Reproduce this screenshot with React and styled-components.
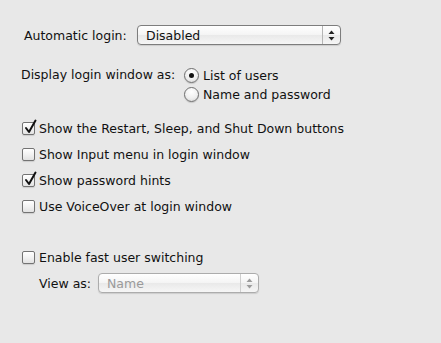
import React from 'react';
import styled, {createGlobalStyle} from 'styled-components';

const GlobalStyle = createGlobalStyle`
  html, body {
    margin: 0;
    padding: 0;
    background: #e8e8e8;
  }
  body {
    font-family: "DejaVu Sans", "Liberation Sans", sans-serif;
    font-size: 12.5px;
    color: #111;
  }
`;

const Pane = styled.div`
  width: 441px;
  height: 343px;
  box-sizing: border-box;
  padding: 25px 0 0 21px;
  display: flex;
  flex-direction: column;
  background: #e8e8e8;
`;

const LoginRow = styled.div`
  display: flex;
  align-items: center;
  height: 20px;
  padding-left: 3px;
`;

const Label = styled.span`
  white-space: nowrap;
  color: ${p => (p.disabled ? '#9a9a9a' : '#111')};
`;

const FieldLabel = styled(Label)`
  width: ${p => p.width}px;
  flex-shrink: 0;
`;

const Popup = styled.div`
  position: relative;
  width: ${p => p.width}px;
  height: 20px;
  box-sizing: border-box;
  border: 1px solid ${p => (p.disabled ? '#acacac' : '#7d7d7d')};
  border-radius: 4px;
  background: linear-gradient(#ffffff, #f4f4f4 50%, #e9e9e9 51%, #f6f6f6);
  box-shadow: 0 1px 1px rgba(0, 0, 0, 0.12);
  display: flex;
  align-items: center;
  padding-left: 8px;
  color: ${p => (p.disabled ? '#9a9a9a' : '#111')};
`;

const PopupArrows = styled.div`
  position: absolute;
  right: 0;
  top: 0;
  bottom: 0;
  width: 17px;
  border-left: 1px solid ${p => (p.disabled ? '#cfcfcf' : '#b5b5b5')};
  display: flex;
  align-items: center;
  justify-content: center;
`;

const DisplayRow = styled.div`
  display: flex;
  margin-top: 22px;
`;

const RadioGroup = styled.div`
  display: flex;
  flex-direction: column;
  gap: 4px;
  margin-left: 7px;
  padding-top: 1px;
`;

const RadioRow = styled.label`
  display: flex;
  align-items: center;
  gap: 4px;
  height: 15px;
`;

const RadioCircle = styled.span`
  width: 15px;
  height: 15px;
  box-sizing: border-box;
  border-radius: 50%;
  border: 1px solid #6e6e6e;
  background: radial-gradient(circle at 50% 30%, #ffffff, #f0f0f0 55%, #d4d4d4);
  box-shadow: 0 1px 1px rgba(0, 0, 0, 0.15);
  display: flex;
  align-items: center;
  justify-content: center;
  &::after {
    content: '';
    width: 5px;
    height: 5px;
    border-radius: 50%;
    background: ${p => (p.checked ? '#111' : 'transparent')};
  }
`;

const CheckList = styled.div`
  display: flex;
  flex-direction: column;
  gap: 13px;
  margin-top: 20px;
  padding-left: 1px;
`;

const CheckRow = styled.label`
  display: flex;
  align-items: center;
  gap: 4px;
  height: 13px;
`;

const Box = styled.span`
  position: relative;
  width: 13px;
  height: 13px;
  box-sizing: border-box;
  border: 1px solid #737373;
  border-radius: 2px;
  background: linear-gradient(#ffffff, #f2f2f2 50%, #e2e2e2);
  box-shadow: 0 1px 1px rgba(0, 0, 0, 0.12);
  flex-shrink: 0;
`;

const Tick = styled.svg`
  position: absolute;
  left: 1px;
  top: -4px;
`;

const FastSwitch = styled.div`
  margin-top: 38px;
  padding-left: 1px;
  display: flex;
  flex-direction: column;
`;

const ViewRow = styled.div`
  display: flex;
  align-items: center;
  margin-top: 9px;
  padding-left: 17px;
`;

const Arrows = ({disabled}) => (
    <svg width="7" height="11" viewBox="0 0 7 11">
        <polygon points="3.5,0.5 6.5,4 0.5,4" fill={disabled ? '#9c9c9c' : '#222'}/>
        <polygon points="0.5,7 6.5,7 3.5,10.5" fill={disabled ? '#9c9c9c' : '#222'}/>
    </svg>
);

const Checkbox = ({checked, children}) => (
    <CheckRow>
        <Box>
            {checked && (
                <Tick width="14" height="16" viewBox="0 0 14 16">
                    <path d="M2 9 L5 13 L11.5 1.5" fill="none" stroke="#111" strokeWidth="2"
                          strokeLinecap="round" strokeLinejoin="round"/>
                </Tick>
            )}
        </Box>
        <Label>{children}</Label>
    </CheckRow>
);

const Radio = ({checked, children}) => (
    <RadioRow>
        <RadioCircle checked={checked}/>
        <Label>{children}</Label>
    </RadioRow>
);

const options = [
    {text: 'Show the Restart, Sleep, and Shut Down buttons', checked: true},
    {text: 'Show Input menu in login window', checked: false},
    {text: 'Show password hints', checked: true},
    {text: 'Use VoiceOver at login window', checked: false},
];

export default function App() {
    return (
        <>
            <GlobalStyle/>
            <Pane>
                <LoginRow>
                    <FieldLabel width={113}>Automatic login:</FieldLabel>
                    <Popup width={204}>
                        Disabled
                        <PopupArrows><Arrows/></PopupArrows>
                    </Popup>
                </LoginRow>

                <DisplayRow>
                    <FieldLabel width={156}>Display login window as:</FieldLabel>
                    <RadioGroup>
                        <Radio checked>List of users</Radio>
                        <Radio>Name and password</Radio>
                    </RadioGroup>
                </DisplayRow>

                <CheckList>
                    {options.map((o, i) => (
                        <Checkbox key={`opt-${i}`} checked={o.checked}>{o.text}</Checkbox>
                    ))}
                </CheckList>

                <FastSwitch>
                    <Checkbox>Enable fast user switching</Checkbox>
                    <ViewRow>
                        <FieldLabel width={59}>View as:</FieldLabel>
                        <Popup width={161} disabled>
                            Name
                            <PopupArrows disabled><Arrows disabled/></PopupArrows>
                        </Popup>
                    </ViewRow>
                </FastSwitch>
            </Pane>
        </>
    );
}
